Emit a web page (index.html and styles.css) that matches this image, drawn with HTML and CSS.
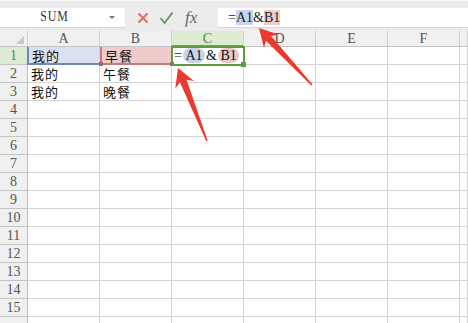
FILE: index.html
```html
<!DOCTYPE html>
<html lang="zh-CN">
<head>
    <meta charset="UTF-8">
    <title>SUM - 工作表</title>
    <link rel="stylesheet" href="styles.css">
</head>
<body>
    <div class="toolbar">
        <div class="namebox">
            <span class="name">SUM</span>
            <span class="caret"></span>
        </div>
        <div class="actions">
            <svg class="icon" width="14" height="14" viewBox="0 0 14 14">
                <path d="M2.5 2.5 L11.5 11.5 M11.5 2.5 L2.5 11.5" stroke="#e26b6b" stroke-width="2" fill="none"/>
            </svg>
            <svg class="icon" width="15" height="14" viewBox="0 0 15 14">
                <path d="M1.5 7 L5.5 12 L13.5 1.5" stroke="#5f9d5f" stroke-width="2" fill="none"/>
            </svg>
            <span class="fx">fx</span>
        </div>
        <div class="formula">=<span class="ref-a">A1</span>&amp;<span class="ref-b">B1</span></div>
    </div>

    <div class="sheet">
        <div class="corner"></div>
        <div class="col-head">A</div>
        <div class="col-head">B</div>
        <div class="col-head active">C</div>
        <div class="col-head">D</div>
        <div class="col-head">E</div>
        <div class="col-head">F</div>
        <div class="col-head"></div>

        <div class="row-head active">1</div>
        <div class="cell ref-cell-a">我的</div>
        <div class="cell ref-cell-b">早餐</div>
        <div class="cell editing">= <span class="pill pill-a">A1</span> &amp; <span class="pill pill-b">B1</span></div>
        <div class="cell"></div><div class="cell"></div><div class="cell"></div><div class="cell"></div>

        <div class="row-head">2</div>
        <div class="cell">我的</div><div class="cell">午餐</div>
        <div class="cell"></div><div class="cell"></div><div class="cell"></div><div class="cell"></div><div class="cell"></div>

        <div class="row-head">3</div>
        <div class="cell">我的</div><div class="cell">晚餐</div>
        <div class="cell"></div><div class="cell"></div><div class="cell"></div><div class="cell"></div><div class="cell"></div>

        <div class="row-head">4</div>
        <div class="cell"></div><div class="cell"></div><div class="cell"></div><div class="cell"></div><div class="cell"></div><div class="cell"></div><div class="cell"></div>
        <div class="row-head">5</div>
        <div class="cell"></div><div class="cell"></div><div class="cell"></div><div class="cell"></div><div class="cell"></div><div class="cell"></div><div class="cell"></div>
        <div class="row-head">6</div>
        <div class="cell"></div><div class="cell"></div><div class="cell"></div><div class="cell"></div><div class="cell"></div><div class="cell"></div><div class="cell"></div>
        <div class="row-head">7</div>
        <div class="cell"></div><div class="cell"></div><div class="cell"></div><div class="cell"></div><div class="cell"></div><div class="cell"></div><div class="cell"></div>
        <div class="row-head">8</div>
        <div class="cell"></div><div class="cell"></div><div class="cell"></div><div class="cell"></div><div class="cell"></div><div class="cell"></div><div class="cell"></div>
        <div class="row-head">9</div>
        <div class="cell"></div><div class="cell"></div><div class="cell"></div><div class="cell"></div><div class="cell"></div><div class="cell"></div><div class="cell"></div>
        <div class="row-head">10</div>
        <div class="cell"></div><div class="cell"></div><div class="cell"></div><div class="cell"></div><div class="cell"></div><div class="cell"></div><div class="cell"></div>
        <div class="row-head">11</div>
        <div class="cell"></div><div class="cell"></div><div class="cell"></div><div class="cell"></div><div class="cell"></div><div class="cell"></div><div class="cell"></div>
        <div class="row-head">12</div>
        <div class="cell"></div><div class="cell"></div><div class="cell"></div><div class="cell"></div><div class="cell"></div><div class="cell"></div><div class="cell"></div>
        <div class="row-head">13</div>
        <div class="cell"></div><div class="cell"></div><div class="cell"></div><div class="cell"></div><div class="cell"></div><div class="cell"></div><div class="cell"></div>
        <div class="row-head">14</div>
        <div class="cell"></div><div class="cell"></div><div class="cell"></div><div class="cell"></div><div class="cell"></div><div class="cell"></div><div class="cell"></div>
        <div class="row-head">15</div>
        <div class="cell"></div><div class="cell"></div><div class="cell"></div><div class="cell"></div><div class="cell"></div><div class="cell"></div><div class="cell"></div>
        <div class="row-head"></div>
        <div class="cell"></div><div class="cell"></div><div class="cell"></div><div class="cell"></div><div class="cell"></div><div class="cell"></div><div class="cell"></div>
    </div>

    <!-- annotation arrows drawn over the sheet -->
    <svg class="arrows" width="468" height="323" viewBox="0 0 468 323">
        <polygon points="259,28 278.6,34.4 271.1,35.9 312.6,84.5 311.4,85.5 265.9,40.7 264,48" fill="#ea3a2e"/>
        <polygon points="178,68 193.9,81 186.5,79.7 207.7,140.7 206.3,141.3 179.9,82.3 175.3,88.4" fill="#ea3a2e"/>
    </svg>
</body>
</html>
```

FILE: styles.css
```css
body {
    margin: 0;
    width: 468px;
    height: 323px;
    overflow: hidden;
    background: #ffffff;
    font-family: "Liberation Serif", "Noto Sans CJK SC", serif;
    color: #222;
    position: relative;
}

.toolbar {
    display: flex;
    align-items: center;
    height: 31px;
    box-sizing: border-box;
    padding: 7px 0 4px;
    background: #ececec;
    border-top: 1px solid #f6f6f6;
}

.namebox {
    display: flex;
    align-items: center;
    width: 125px;
    height: 20px;
    background: #ffffff;
    border-bottom: 1px solid #d6d6d6;
    box-sizing: border-box;
}

.name {
    flex: 1;
    text-align: center;
    font-size: 14px;
    letter-spacing: 1px;
    color: #333;
    padding-left: 0;
    transform: scaleX(0.85);
}

.caret {
    width: 0;
    height: 0;
    margin-right: 10px;
    border-left: 3px solid transparent;
    border-right: 3px solid transparent;
    border-top: 3px solid #777;
}

.actions {
    display: flex;
    align-items: center;
    gap: 9px;
    width: 93px;
    padding-left: 11px;
    box-sizing: border-box;
}

.fx {
    font-family: "Liberation Serif", serif;
    font-style: italic;
    font-size: 17px;
    color: #666;
    margin-left: 2px;
}

.formula {
    flex: 1;
    height: 20px;
    line-height: 20px;
    background: #ffffff;
    border-bottom: 1px solid #d6d6d6;
    box-sizing: border-box;
    padding-left: 10px;
    font-size: 14px;
    color: #222;
}

.ref-a {
    background: #c9d5ee;
}

.ref-b {
    background: #efcdcd;
}

.sheet {
    display: grid;
    grid-template-columns: 28px repeat(6, 72px) 1fr;
    grid-template-rows: 16px;
    grid-auto-rows: 18px;
}

.corner,
.col-head,
.row-head {
    background: #f0f0f0;
    color: #555;
    font-size: 14px;
    box-sizing: border-box;
    border-right: 1px solid #cfcfcf;
    border-bottom: 1px solid #c4c4c4;
    text-align: center;
}

.corner {
    position: relative;
}

.corner::after {
    content: "";
    position: absolute;
    right: 3px;
    bottom: 2px;
    border-left: 8px solid transparent;
    border-bottom: 8px solid #c8c8c8;
}

.col-head {
    line-height: 16px;
}

.col-head.active {
    background: #dcebd1;
    color: #4b8a3b;
    border-bottom: 2px solid #6aa84f;
}

.row-head {
    line-height: 18px;
    border-right-color: #bdbdbd;
}

.row-head.active {
    background: #dcebd1;
    color: #4b8a3b;
}

.cell {
    box-sizing: border-box;
    border-right: 1px solid #d4d4d4;
    border-bottom: 1px solid #d4d4d4;
    font-family: "Noto Sans CJK SC", sans-serif;
    font-size: 13px;
    line-height: 17px;
    letter-spacing: 1px;
    padding-left: 3px;
    color: #111;
    white-space: nowrap;
}

.ref-cell-a {
    background: #d9e1f2;
    border-left: 2px solid #6f88b8;
    border-bottom: 2px solid #6f88b8;
    margin-left: -1px;
}

.ref-cell-b {
    position: relative;
    background: #f0cbcb;
    border-left: 2px solid #c27d7d;
    border-bottom: 2px solid #c27d7d;
    border-right: 1px solid #c27d7d;
}

.ref-cell-b::before,
.ref-cell-b::after {
    content: "";
    position: absolute;
    width: 4px;
    height: 4px;
    background: #b35e5e;
    bottom: -3px;
}

.ref-cell-b::before {
    left: -3px;
}

.ref-cell-b::after {
    right: -3px;
}

.editing {
    position: relative;
    font-family: "Liberation Serif", serif;
    font-size: 14px;
    letter-spacing: 0;
    word-spacing: -2px;
    padding-left: 2px;
    outline: 2px solid #5d9b3e;
    outline-offset: -1px;
}

.editing::after {
    content: "";
    position: absolute;
    right: -3px;
    bottom: -3px;
    width: 5px;
    height: 5px;
    background: #5d9b3e;
}

.pill {
    padding: 0 2px;
    border-radius: 8px;
}

.pill-a {
    background: #c6d2ec;
}

.pill-b {
    background: #ecc9c9;
}

.arrows {
    position: absolute;
    top: 0;
    left: 0;
    pointer-events: none;
}
```
